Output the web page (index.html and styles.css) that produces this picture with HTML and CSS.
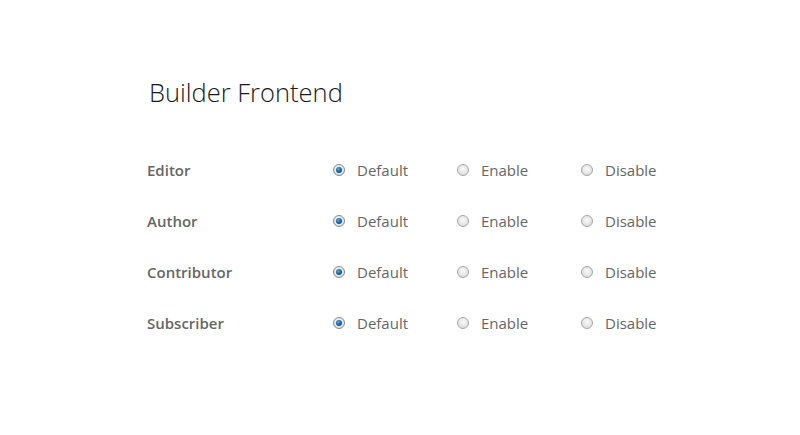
FILE: index.html
```html
<!DOCTYPE html>
<html lang="en">
<head>
  <meta charset="UTF-8">
  <title>Builder Frontend</title>
  <link rel="stylesheet" href="styles.css">
</head>
<body>
  <div class="settings">
    <h1 class="settings-title">Builder Frontend</h1>
    <div class="role-list">
      <div class="role-row">
        <div class="role-name">Editor</div>
        <label class="option"><span class="radio checked"></span>Default</label>
        <label class="option"><span class="radio"></span>Enable</label>
        <label class="option"><span class="radio"></span>Disable</label>
      </div>
      <div class="role-row">
        <div class="role-name">Author</div>
        <label class="option"><span class="radio checked"></span>Default</label>
        <label class="option"><span class="radio"></span>Enable</label>
        <label class="option"><span class="radio"></span>Disable</label>
      </div>
      <div class="role-row">
        <div class="role-name">Contributor</div>
        <label class="option"><span class="radio checked"></span>Default</label>
        <label class="option"><span class="radio"></span>Enable</label>
        <label class="option"><span class="radio"></span>Disable</label>
      </div>
      <div class="role-row">
        <div class="role-name">Subscriber</div>
        <label class="option"><span class="radio checked"></span>Default</label>
        <label class="option"><span class="radio"></span>Enable</label>
        <label class="option"><span class="radio"></span>Disable</label>
      </div>
    </div>
  </div>
</body>
</html>
```

FILE: styles.css
```css
body {
  margin: 0;
  background-color: #fff;
  font-family: "Open Sans", Arial, sans-serif;
}
.settings {
  padding: 74px 0 0 147px;
}
.settings-title {
  margin: 0 0 0 2px;
  font-size: 25.5px;
  font-weight: 300;
  color: #1a1a1a;
  line-height: 36px;
}
.role-list {
  margin-top: 34px;
}
.role-row {
  display: grid;
  grid-template-columns: 186px 124px 124px 124px;
  align-items: center;
  height: 51px;
}
.role-name {
  font-size: 15px;
  font-weight: 600;
  color: #666;
}
.option {
  display: flex;
  align-items: center;
  font-size: 15px;
  color: #666;
}
.radio {
  box-sizing: border-box;
  width: 12px;
  height: 12px;
  margin-right: 12px;
  border-radius: 50%;
  border: 1px solid #a6a6a6;
  background: radial-gradient(circle at 50% 40%, #fafafa 0, #e6e6e6 55%, #d2d2d2 100%);
  position: relative;
}
.radio.checked {
  border-color: #7d8c99;
}
.radio.checked::after {
  content: "";
  position: absolute;
  left: 2px;
  top: 2px;
  width: 6px;
  height: 6px;
  border-radius: 50%;
  background: radial-gradient(circle at 40% 35%, #5aa6dc 0, #155f97 55%, #0d3a5e 100%);
}
```
